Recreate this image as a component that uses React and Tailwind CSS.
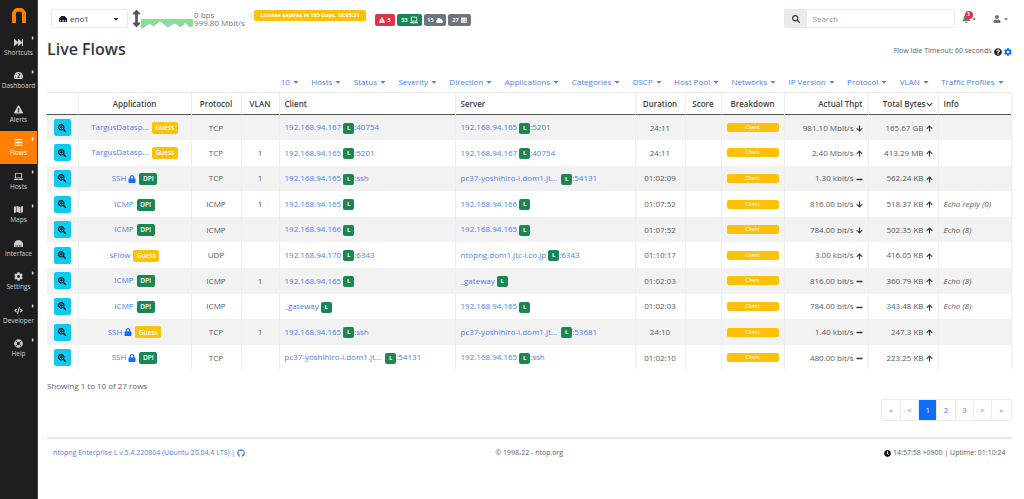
import React from "react";
import {
  FaFastForward, FaTachometerAlt, FaExclamationTriangle, FaLaptop, FaMap,
  FaEthernet, FaCog, FaCode, FaLifeRing, FaSearch, FaSearchPlus, FaLock, FaArrowUp,
  FaArrowDown, FaMinus, FaArrowsAltV, FaCloud, FaBell, FaUser, FaQuestionCircle,
  FaClock, FaGithub, FaCaretDown, FaCaretRight, FaChevronDown, FaBars, FaServer,
} from "react-icons/fa";

const navItems = [
  { label: "Shortcuts", icon: FaFastForward, arrow: true },
  { label: "Dashboard", icon: FaTachometerAlt, arrow: true },
  { label: "Alerts", icon: FaExclamationTriangle },
  { label: "Flows", icon: FaBars, arrow: true, active: true },
  { label: "Hosts", icon: FaLaptop, arrow: true },
  { label: "Maps", icon: FaMap, arrow: true },
  { label: "Interface", icon: FaEthernet },
  { label: "Settings", icon: FaCog, arrow: true },
  { label: "Developer", icon: FaCode, arrow: true },
  { label: "Help", icon: FaLifeRing, arrow: true },
];

const filters = [
  "10", "Hosts", "Status", "Severity", "Direction", "Applications", "Categories", "DSCP",
  "Host Pool", "Networks", "IP Version", "Protocol", "VLAN", "Traffic Profiles",
];

const flows = [
  { app: "TargusDatasp...", tag: "Guess", proto: "TCP", vlan: "", client: "192.168.94.167", cport: ":40754", server: "192.168.94.165", sport: ":5201", dur: "24:11", thpt: "981.10 Mbit/s", dir: "down", bytes: "165.67 GB", info: "" },
  { app: "TargusDatasp...", tag: "Guess", proto: "TCP", vlan: "1", client: "192.168.94.165", cport: ":5201", server: "192.168.94.167", sport: ":40754", dur: "24:11", thpt: "2.40 Mbit/s", dir: "up", bytes: "413.29 MB", info: "" },
  { app: "SSH", lock: true, tag: "DPI", proto: "TCP", vlan: "1", client: "192.168.94.165", cport: ":ssh", server: "pc37-yoshihiro-i.dom1.jt...", sport: ":54131", dur: "01:02:09", thpt: "1.30 kbit/s", dir: "same", bytes: "562.24 KB", info: "" },
  { app: "ICMP", tag: "DPI", proto: "ICMP", vlan: "1", client: "192.168.94.165", cport: "", server: "192.168.94.166", sport: "", dur: "01:07:52", thpt: "816.00 bit/s", dir: "down", bytes: "518.37 KB", info: "Echo reply (0)" },
  { app: "ICMP", tag: "DPI", proto: "ICMP", vlan: "", client: "192.168.94.166", cport: "", server: "192.168.94.165", sport: "", dur: "01:07:52", thpt: "784.00 bit/s", dir: "down", bytes: "502.35 KB", info: "Echo (8)" },
  { app: "sFlow", tag: "Guess", proto: "UDP", vlan: "", client: "192.168.94.170", cport: ":6343", server: "ntopng.dom1.jtc-i.co.jp", sport: ":6343", dur: "01:10:17", thpt: "3.00 kbit/s", dir: "up", bytes: "416.05 KB", info: "" },
  { app: "ICMP", tag: "DPI", proto: "ICMP", vlan: "1", client: "192.168.94.165", cport: "", server: "_gateway", sport: "", dur: "01:02:03", thpt: "816.00 bit/s", dir: "same", bytes: "360.79 KB", info: "Echo (8)" },
  { app: "ICMP", tag: "DPI", proto: "ICMP", vlan: "", client: "_gateway", cport: "", server: "192.168.94.165", sport: "", dur: "01:02:03", thpt: "784.00 bit/s", dir: "same", bytes: "343.48 KB", info: "Echo (8)" },
  { app: "SSH", lock: true, tag: "Guess", proto: "TCP", vlan: "1", client: "192.168.94.165", cport: ":ssh", server: "pc37-yoshihiro-i.dom1.jt...", sport: ":53681", dur: "24:10", thpt: "1.40 kbit/s", dir: "same", bytes: "247.3 KB", info: "" },
  { app: "SSH", lock: true, tag: "DPI", proto: "TCP", vlan: "", client: "pc37-yoshihiro-i.dom1.jt...", cport: ":54131", server: "192.168.94.165", sport: ":ssh", dur: "01:02:10", thpt: "480.00 bit/s", dir: "same", bytes: "223.25 KB", info: "" },
];

function Sidebar() {
  return (
    <aside className="w-[38px] shrink-0 bg-[#1e1e1e] flex flex-col text-[#d4d4d4] border-r border-[#444]">
      <div className="h-[30px] pt-[1px] flex items-center justify-center">
        <svg width="14" height="15" viewBox="0 0 14 15">
          <path d="M2 15V6a5 4.4 0 0 1 10 0V15" fill="none" stroke="#ff7f00" strokeWidth="4" />
        </svg>
      </div>
      {navItems.map((item) => {
        const Icon = item.icon;
        return (
          <div
            key={item.label}
            className={`relative h-[33.5px] flex flex-col items-center justify-center gap-[2px] pt-[1px] text-[6.5px] leading-[8px] ${
              item.active ? "bg-[#ff7f00] text-white" : "text-[#cfcfcf]"
            }`}
          >
            <Icon className="text-[9px]" />
            <span>{item.label}</span>
            {item.arrow && <FaCaretRight className="absolute top-[5px] right-[1px] text-[6px]" />}
          </div>
        );
      })}
    </aside>
  );
}

function Sparkline() {
  return (
    <svg width="52" height="10" viewBox="0 0 52 10" className="mt-[11px] shrink-0">
      <path d="M0 0 L52 0 L52 6 L49 8 L46 5 L44 3 L42 6 L39 8 L36 5 L33 4 L30 6 L27 8 L24 6 L21 3 L18 2 L15 5 L12 7 L9 4 L6 6 L3 8 L0 9 Z" fill="#86e28c" />
      <path d="M0 9 L3 8 L6 6 L9 4 L12 7 L15 5 L18 2 L21 3 L24 6 L27 8 L30 6 L33 4 L36 5 L39 8 L42 6 L44 3 L46 5 L49 8 L52 6" fill="none" stroke="#7fb2e8" strokeWidth="0.7" />
    </svg>
  );
}

function TopBar() {
  return (
    <div className="h-[37px] flex items-center text-[#495057]">
      <div className="ml-[4px] w-[77px] h-[19px] flex items-center justify-between px-[7px] border border-[#e6e8ea] rounded-[2px] text-[8px] text-[#333]">
        <span className="flex items-center gap-[3px]"><FaEthernet className="text-[8px] text-[#1a1a3a]" />eno1</span>
        <FaCaretDown className="text-[8px]" />
      </div>
      <span className="ml-[3px] w-[10px] flex justify-center overflow-hidden shrink-0">
        <FaArrowsAltV className="text-[17px] text-[#555] shrink-0" />
      </span>
      <Sparkline />
      <div className="ml-[1px] w-[60px] text-[8px] leading-[8px] text-[#6c757d]">
        <div>0 bps</div>
        <div className="whitespace-nowrap">999.80 Mbit/s</div>
      </div>
      <div className="mb-[7px] w-[112px] h-[11px] flex items-center justify-center bg-[#ffc107] rounded-[2px] text-white text-[5.5px] font-bold whitespace-nowrap">
        License expires in 185 Days, 18:05:31
      </div>
      <div className="ml-[9px] mt-[3px] flex items-center gap-[2px] text-white text-[5.5px] font-bold">
        <span className="h-[12px] w-[20px] rounded-[2px] bg-[#dc3545] flex items-center justify-center gap-[2px]"><FaExclamationTriangle className="text-[6px]" />5</span>
        <span className="h-[12px] w-[25px] rounded-[2px] bg-[#198754] flex items-center justify-center gap-[2px]">33<FaLaptop className="text-[8px]" /></span>
        <span className="h-[12px] w-[22px] rounded-[2px] bg-[#6c757d] flex items-center justify-center gap-[2px]">15<FaCloud className="text-[7px]" /></span>
        <span className="h-[12px] w-[23px] rounded-[2px] bg-[#6c757d] flex items-center justify-center gap-[2px]">27<FaServer className="text-[6px]" /></span>
      </div>
      <div className="ml-auto h-[19px] w-[171px] flex border border-[#e6e8ea] rounded-[2px]">
        <div className="w-[22px] bg-[#e9ecef] flex items-center justify-center"><FaSearch className="text-[8px] text-[#333]" /></div>
        <div className="flex-1 flex items-center pl-[6px] text-[8px] text-[#8a9097]">Search</div>
      </div>
      <div className="ml-[8px] w-[24px] relative flex items-center text-[#6c757d]">
        <FaBell className="-ml-[1px] text-[9px]" />
        <FaCaretDown className="text-[6px]" />
        <span className="absolute -top-[3px] left-[2px] w-[8px] h-[8px] rounded-full bg-[#dc3545] text-white text-[5px] font-bold flex items-center justify-center">3</span>
      </div>
      <div className="ml-[6px] mr-[3px] flex items-center gap-[2px] text-[#6c757d]">
        <FaUser className="text-[8px]" />
        <FaCaretDown className="text-[6px]" />
      </div>
    </div>
  );
}

function Arrow({ dir }) {
  if (dir === "up") return <FaArrowUp className="inline ml-[2px] text-[7px] text-[#333]" />;
  if (dir === "down") return <FaArrowDown className="inline ml-[2px] text-[7px] text-[#333]" />;
  return <FaMinus className="inline ml-[2px] text-[7px] text-[#333]" />;
}

function Tag({ tag }) {
  if (tag === "Guess") {
    return <span className="inline-flex items-center justify-center h-[12px] w-[26px] ml-[3px] rounded-[2px] bg-[#ffc107] text-white text-[6.5px] font-semibold align-middle">Guess</span>;
  }
  return <span className="inline-flex items-center justify-center h-[12px] w-[18px] ml-[3px] rounded-[2px] bg-[#198754] text-white text-[6.5px] font-semibold align-middle">DPI</span>;
}

function Local({ name }) {
  const wide = name.endsWith("...");
  return (
    <span className={`inline-flex items-center justify-center h-[11px] w-[11px] mr-[2px] rounded-[2px] bg-[#198754] text-white text-[6px] font-bold align-middle ${wide ? "ml-[4px]" : "ml-[2px]"}`}>
      L
    </span>
  );
}

function FlowRow({ row, index }) {
  const td = "border-r border-[#eceef0] px-[5px] overflow-hidden whitespace-nowrap";
  return (
    <tr className={`h-[25.6px] ${index % 2 === 0 ? "bg-[#f2f2f2]" : "bg-white"}`}>
      <td className={`${td} text-center`}>
        <span className="inline-flex items-center justify-center w-[17px] h-[17px] rounded-[2px] bg-[#0dcaf0] align-middle">
          <FaSearchPlus className="text-[8px] text-[#111]" />
        </span>
      </td>
      <td className={`${td} text-center`}>
        <span className="text-[#4a80f5]">{row.app}</span>
        {row.lock && <FaLock className="inline ml-[2px] text-[8px] text-[#0d6efd]" />}
        <Tag tag={row.tag} />
      </td>
      <td className={`${td} text-center`}>{row.proto}</td>
      <td className={`${td} text-center`}>{row.vlan}</td>
      <td className={td}>
        <span className="text-[#4a80f5]">{row.client}</span><Local name={row.client} /><span className="text-[#4a80f5] -ml-[2px]">{row.cport}</span>
      </td>
      <td className={td}>
        <span className="text-[#4a80f5]">{row.server}</span><Local name={row.server} /><span className="text-[#4a80f5] -ml-[2px]">{row.sport}</span>
      </td>
      <td className={`${td} text-center`}>{row.dur}</td>
      <td className={td}></td>
      <td className={`${td} text-center`}>
        <div className="h-[9px] rounded-[2px] bg-[#ffc107] text-white text-[5.5px] leading-[9px] text-center">Client</div>
      </td>
      <td className={`${td} text-right`}>{row.thpt}<Arrow dir={row.dir} /></td>
      <td className={`${td} text-right`}>{row.bytes}<Arrow dir="up" /></td>
      <td className={`${td} italic`}>{row.info}</td>
    </tr>
  );
}

function FlowsTable() {
  const th = "border-r border-[#eceef0] px-[5px] font-semibold text-[#3c4146] whitespace-nowrap";
  return (
    <table className="w-[964px] table-fixed border-collapse text-[8px] text-[#555b61]">
      <colgroup>
        <col className="w-[31px]" /><col className="w-[113px]" /><col className="w-[50px]" /><col className="w-[38px]" />
        <col className="w-[176px]" /><col className="w-[180px]" /><col className="w-[50px]" /><col className="w-[36px]" />
        <col className="w-[63px]" /><col className="w-[84px]" /><col className="w-[70px]" /><col className="w-[73px]" />
      </colgroup>
      <thead>
        <tr className="h-[22px] border-t border-b-[1px] border-t-[#e9ebed] border-b-[#555]">
          <th className={th}></th>
          <th className={`${th} text-center`}>Application</th>
          <th className={`${th} text-center`}>Protocol</th>
          <th className={`${th} text-center`}>VLAN</th>
          <th className={`${th} text-left`}>Client</th>
          <th className={`${th} text-left`}>Server</th>
          <th className={`${th} text-center`}>Duration</th>
          <th className={`${th} text-center`}>Score</th>
          <th className={`${th} text-center`}>Breakdown</th>
          <th className={`${th} text-right`}>Actual Thpt</th>
          <th className={`${th} text-right`}>Total Bytes<FaChevronDown className="inline text-[7px]" /></th>
          <th className={`${th} text-left`}>Info</th>
        </tr>
      </thead>
      <tbody>
        {flows.map((row, i) => <FlowRow key={i} row={row} index={i} />)}
      </tbody>
    </table>
  );
}

function Pagination() {
  const pages = ["«", "<", "1", "2", "3", ">", "»"];
  return (
    <div className="flex justify-end mt-[8px]">
      <div className="flex border border-[#e9ebed] rounded-[2px] text-[8px]">
        {pages.map((p) => (
          <span
            key={p}
            className={`w-[18.3px] h-[20px] flex items-center justify-center border-r border-[#e9ebed] last:border-r-0 ${
              p === "1" ? "bg-[#0d6efd] text-white" : /\d/.test(p) ? "text-[#4a80f5]" : "text-[#8a9097]"
            }`}
          >
            {p}
          </span>
        ))}
      </div>
    </div>
  );
}

export default function App() {
  return (
    <div className="flex h-[499px] w-[1024px] overflow-hidden bg-white font-['Open_Sans','Liberation_Sans',sans-serif]">
      <Sidebar />
      <main className="flex-1 pl-[9px] pr-[13px]">
        <TopBar />
        <div className="flex items-center justify-between h-[24px]">
          <h1 className="text-[16px] font-semibold text-[#33383d]">Live Flows</h1>
          <div className="flex items-center gap-[2px] text-[7px] text-[#5a6066] mt-[5px]">
            Flow Idle Timeout: 60 seconds
            <FaQuestionCircle className="text-[8px] text-[#222]" />
            <FaCog className="text-[8px] text-[#0d6efd]" />
          </div>
        </div>
        <div className="h-[31px] pt-[11px] flex items-center justify-end gap-[11.4px] pr-[7px] text-[8px] text-[#4a80f5]">
          {filters.map((f) => (
            <span key={f} className="flex items-center gap-[2px] whitespace-nowrap">{f}<FaCaretDown className="text-[8px]" /></span>
          ))}
        </div>
        <FlowsTable />
        <div className="mt-[11px] text-[8px] leading-[10px] text-[#5a6066]">Showing 1 to 10 of 27 rows</div>
        <Pagination />
        <footer className="mt-[16px] border-t-2 border-[#e6e6e6] h-[30px] grid grid-cols-3 items-center pl-[6px] pr-[6px] text-[7px]">
          <span className="flex items-center gap-[2px] text-[#4a80f5] whitespace-nowrap">ntopng Enterprise L v.5.4.220804 (Ubuntu 20.04.4 LTS) | <FaGithub className="text-[8px]" /></span>
          <span className="text-center text-[#5a6066]">© 1998-22 - ntop.org</span>
          <span className="flex items-center justify-end gap-[2px] text-[#5a6066] whitespace-nowrap"><FaClock className="text-[7px] text-[#111]" />14:57:58 +0900 | Uptime: 01:10:24</span>
        </footer>
      </main>
    </div>
  );
}
